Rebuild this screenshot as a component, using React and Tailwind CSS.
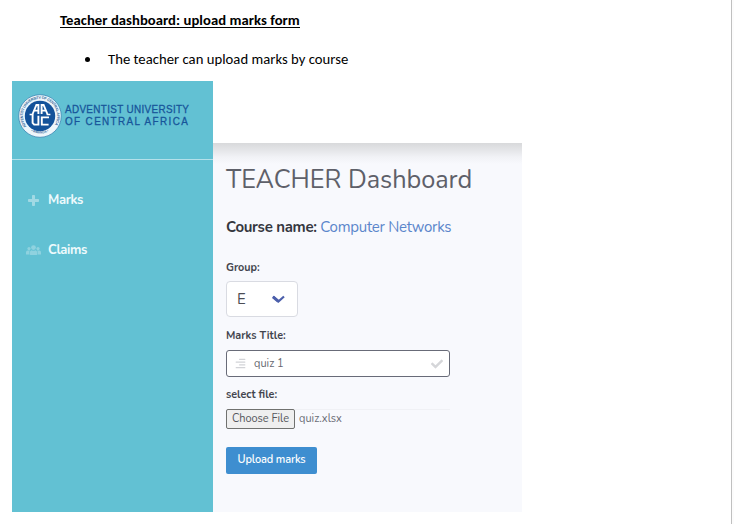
import React from "react";
import { FaAlignRight, FaCheck } from "react-icons/fa";

function Seal() {
  return (
    <svg width="44" height="44" viewBox="0 0 44 44" className="shrink-0">
      <defs>
        <path id="ring" d="M 8.6 32.6 A 17.1 17.1 0 1 1 35.4 32.6" />
        <path id="ringBottom" d="M 13 37.2 A 18.6 18.6 0 0 0 31 37.2" />
      </defs>
      <circle cx="22" cy="22" r="21.3" fill="#eef6fb" stroke="#3f86b4" strokeWidth="0.8" />
      <text fontFamily="Liberation Sans, sans-serif" fontSize="3.8" fontWeight="700" fill="#3d6f9f">
        <textPath href="#ring" textLength="74">ADVENTIST UNIVERSITY OF CENTRAL AFRICA</textPath>
      </text>
      <text fontFamily="Liberation Sans, sans-serif" fontSize="3.2" fontWeight="700" fill="#3d6f9f">
        <textPath href="#ringBottom">• RWANDA •</textPath>
      </text>
      <circle cx="22" cy="22" r="15.2" fill="#13529a" />
      <g fill="none" stroke="#fff" strokeWidth="1.9">
        <path d="M14.6 20 L18.4 11 H20.4 V20 M16.4 16.6 H20.4" />
        <path d="M29.4 20 L25.6 11 H23.6 V20 M23.6 16.6 H27.6" />
        <path d="M11.6 20.6 H15.4 M28.6 20.6 H32.4" strokeWidth="1.5" />
        <path d="M14.6 20.4 V28.8 L16.2 30.6 H20.4 V21.8" />
        <path d="M31 23.4 H23.8 V30.6 H30.6" />
      </g>
    </svg>
  );
}

function PlusIcon() {
  return (
    <svg width="11" height="11" viewBox="0 0 11 11" fill="currentColor">
      <path d="M4 0.8 Q4 0 4.8 0 H6.2 Q7 0 7 0.8 V4 H10.2 Q11 4 11 4.8 V6.2 Q11 7 10.2 7 H7 V10.2 Q7 11 6.2 11 H4.8 Q4 11 4 10.2 V7 H0.8 Q0 7 0 6.2 V4.8 Q0 4 0.8 4 H4 Z" />
    </svg>
  );
}

function GroupIcon() {
  return (
    <svg width="15" height="10" viewBox="0 0 15 10" fill="currentColor">
      <circle cx="3" cy="3.6" r="1.6" />
      <circle cx="12" cy="3.6" r="1.6" />
      <circle cx="7.5" cy="2.6" r="2.4" />
      <path d="M0 9.4 V7.4 Q0 5.6 1.6 5.6 H4 Q3 6.6 3 9.4 Z" />
      <path d="M15 9.4 V7.4 Q15 5.6 13.4 5.6 H11 Q12 6.6 12 9.4 Z" />
      <path d="M3.5 9.2 Q3.5 5.7 5.6 5.3 Q7.5 6.3 9.4 5.3 Q11.5 5.7 11.5 9.2 Q11.5 10 10.5 10 H4.5 Q3.5 10 3.5 9.2 Z" />
    </svg>
  );
}

function Sidebar() {
  return (
    <aside className="flex w-[201px] flex-col bg-[#62c1d3]">
      <div className="flex h-[79px] items-start border-b border-[#b4e1ea] pl-[6px] pt-[13px]">
        <Seal />
        <div className="pl-[3px] pt-[9px] font-['Liberation_Sans',sans-serif] text-[11.5px] leading-[13px] whitespace-nowrap text-[#17559a] [-webkit-text-stroke:0.3px_#17559a]">
          <div className="h-[12px] w-[124px] origin-left scale-x-[0.86] tracking-[0.4px]">ADVENTIST UNIVERSITY</div>
          <div className="h-[12px] w-[124px] origin-left scale-x-[0.86] tracking-[1.6px]">OF CENTRAL AFRICA</div>
        </div>
      </div>
      <nav className="flex flex-col pt-[30px] font-[Nunito,Lato,sans-serif] text-[13px] font-bold tracking-[-0.35px] text-[#eefafc]">
        <a className="flex h-5 items-center">
          <span className="flex w-[36px] justify-center pl-[6px] text-[#a1d9e4]"><PlusIcon /></span>
          <span className="pt-[2px]">Marks</span>
        </a>
        <a className="mt-[30px] flex h-5 items-center">
          <span className="flex w-[36px] justify-center pl-[6px] text-[#8fd2df]"><GroupIcon /></span>
          <span className="pt-[2px]">Claims</span>
        </a>
      </nav>
    </aside>
  );
}

function Label({ children }) {
  return <label className="block h-4 text-[10.8px] font-bold leading-[18px] text-[#43454e]">{children}</label>;
}

function Dashboard() {
  return (
    <main className="flex w-[309px] flex-col bg-white font-[Nunito,Lato,sans-serif]">
      <header className="h-[62px]" />
      <section className="flex-1 bg-[#f8f9fd] bg-[linear-gradient(to_bottom,#d8d9db_0px,#e4e5e8_7px,#f1f2f6_14px,#f8f9fd_21px)] pl-[13px]">
        <h1 className="h-[53px] pt-[21px] text-[25.3px] font-normal leading-8 tracking-[-0.04px] whitespace-nowrap text-[#5e6069]">TEACHER Dashboard</h1>
        <p className="mt-[21px] h-5 text-[15px] leading-5 tracking-[-0.27px] whitespace-nowrap text-[#5b86cb]">
          <b className="tracking-[-0.3px] text-[#35373f]">Course name:</b> Computer Networks
        </p>
        <div className="pt-[22px]">
          <Label>Group:</Label>
          <div className="mt-[6px] flex h-[36px] w-[72px] items-center rounded-[4px] border border-[#d9dbe2] bg-white pl-[10px] text-[15px] text-[#4c4d55]">
            <span className="w-[35px] pt-px">E</span>
            <svg width="13" height="9" viewBox="0 0 13 9" fill="none">
              <path d="M1 1.5 L6.4 6.5 L12 1.5" stroke="#4c5fab" strokeWidth="2.2" />
              <path d="M1 1.8 L6.4 6.4" stroke="#4c5fab" strokeWidth="3" />
            </svg>
          </div>
        </div>
        <div className="pt-[10px]">
          <Label>Marks Title:</Label>
          <div className="mt-[7px] flex h-[27px] w-[224px] items-center rounded-[3px] border border-[#686b78] bg-white pl-[8px] pr-[6px] text-[11px] text-[#66676f]">
            <FaAlignRight size={11} className="text-[#d2d3d7]" />
            <span className="flex-1 pl-[8px] pt-px">quiz 1</span>
            <FaCheck size={12} className="text-[#d5d6d9]" />
          </div>
        </div>
        <div className="pt-[9px]">
          <Label>select file:</Label>
          <div className="mt-[7px] flex h-[20px] w-[224px] items-center border-t border-[#f0f1f5] text-[11px] text-[#6b6d76]">
            <span className="-mt-px flex h-[20px] w-[69px] shrink-0 items-center justify-center rounded-[2px] border border-[#70716f] bg-[#efefef] pt-px text-[11px] tracking-[-0.05px] whitespace-nowrap text-[#55565c]">Choose File</span>
            <span className="pl-[4px]">quiz.xlsx</span>
          </div>
        </div>
        <button className="mt-[18px] flex h-[27px] w-[91px] items-center justify-center rounded-[2px] bg-[#3e8ed0] pb-px text-[11px] font-semibold tracking-[-0.15px] whitespace-nowrap text-white">Upload marks</button>
      </section>
    </main>
  );
}

export default function App() {
  return (
    <div className="flex h-[524px] w-[734px] overflow-hidden bg-[#fcfcfc] font-[Lato,sans-serif]">
      <div className="w-[732px] border-r border-[#c0c0c0] bg-white">
        <div className="flex h-[81px] flex-col pl-[60px] font-[Carlito,Lato,sans-serif] text-[14.67px] text-black">
          <h2 className="mt-[11px] h-[17px] w-[240px] border-b border-black font-bold leading-[19px] tracking-[0.05px] whitespace-nowrap">Teacher dashboard: upload marks form</h2>
          <div className="mt-[21px] flex h-5 items-center leading-5">
            <span className="ml-[25px] mr-[18px] size-[5px] rounded-full bg-black" />
            <span className="tracking-[0.03px] whitespace-nowrap">The teacher can upload marks by course</span>
          </div>
        </div>
        <div className="ml-[12px] flex h-[431px]">
          <Sidebar />
          <Dashboard />
        </div>
      </div>
    </div>
  );
}
